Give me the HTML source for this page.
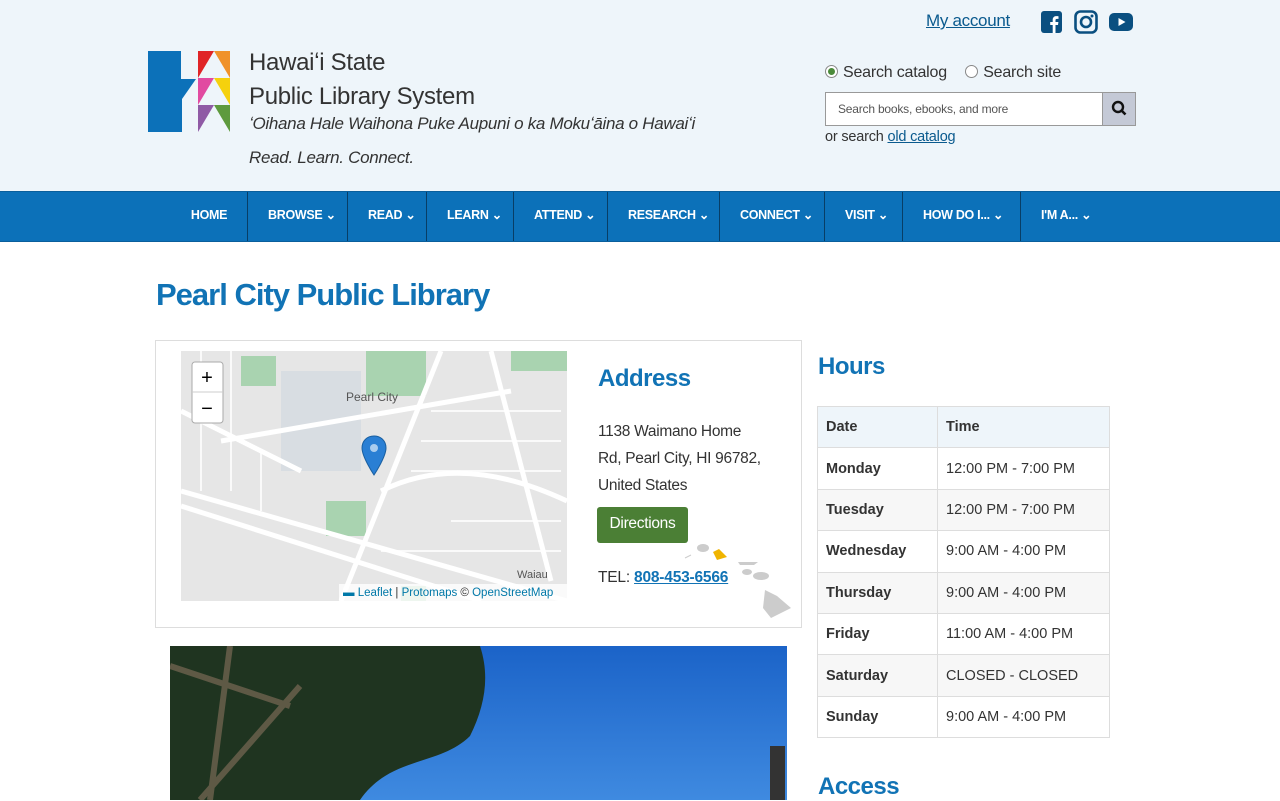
<!DOCTYPE html>
<html><head><meta charset="utf-8"><style>
*{box-sizing:border-box;margin:0;padding:0}
body{width:1280px;height:800px;overflow:hidden;background:#fff;font-family:"Liberation Sans",sans-serif;color:#333}
.hdr{position:absolute;left:0;top:0;width:1280px;height:191px;background:#eef5fa}
.nav{position:absolute;left:0;top:191px;width:1280px;height:51px;background:#0c71b9;border-top:1px solid #0a5f9c;border-bottom:1px solid #0a5f9c}
.nav span{position:absolute;top:0;height:49px;line-height:47px;color:#fff;font-weight:bold;font-size:12.5px;text-align:center;letter-spacing:-0.3px}
.sep{position:absolute;top:0;width:1px;height:49px;background:#083e66}
.abs{position:absolute}
h1{position:absolute;left:156px;top:277px;font-size:31px;color:#1173b5;font-weight:bold;letter-spacing:-1px}
table{border-collapse:collapse;font-size:14.5px}
td{border:1px solid #ddd;height:41.4px;padding:0 8px;color:#333}
</style></head><body>
<div class="hdr"></div>
<svg class="abs" style="left:148px;top:51px" width="82" height="81" viewBox="0 0 82 81">
<path d="M0 0H33V28H48L34 48V81H0Z" fill="#0c71b9"/>
<polygon points="50,0 66,0 50,27" fill="#e02427"/>
<polygon points="66,0 82,0 82,27" fill="#f0922a"/>
<polygon points="50,27 66,27 50,54" fill="#e14aa1"/>
<polygon points="66,27 82,27 82,54" fill="#f5d10d"/>
<polygon points="50,54 66,54 50,81" fill="#8f5aa5"/>
<polygon points="66,54 82,54 82,81" fill="#5e9a3e"/>
</svg>
<div class="abs" style="left:249px;top:46px;font-size:24px;line-height:34px;color:#333;letter-spacing:-0.3px">Hawaiʻi State<br>Public Library System</div>
<div class="abs" style="left:249px;top:114px;font-size:17px;font-style:italic;color:#333;letter-spacing:-0.3px">ʻOihana Hale Waihona Puke Aupuni o ka Mokuʻāina o Hawaiʻi</div>
<div class="abs" style="left:249px;top:148px;font-size:17px;font-style:italic;color:#333;letter-spacing:-0.3px">Read. Learn. Connect.</div>
<a class="abs" style="left:926px;top:11px;font-size:17px;color:#0a5a8e;text-decoration:underline;letter-spacing:-0.3px">My account</a>
<svg class="abs" style="left:1041px;top:11px" width="22" height="23"><rect width="21" height="22" rx="3" fill="#0a4f80"/><path d="M14.5 22v-8h2.5l.4-3h-2.9V9.3c0-.9.3-1.4 1.5-1.4h1.5V5.2c-.3 0-1.2-.1-2.2-.1-2.2 0-3.6 1.3-3.6 3.7V11H9.2v3h2.5v8z" fill="#fff"/></svg>
<svg class="abs" style="left:1074px;top:10px" width="25" height="25"><rect x="1.5" y="1.5" width="21" height="21" rx="5" fill="none" stroke="#0a4f80" stroke-width="2.6"/><circle cx="12" cy="12" r="5" fill="none" stroke="#0a4f80" stroke-width="2.6"/><circle cx="18" cy="6" r="1.5" fill="#0a4f80"/></svg>
<svg class="abs" style="left:1109px;top:13px" width="25" height="19"><rect width="24" height="18" rx="5" fill="#0a4f80"/><path d="M9.5 5v8l7-4z" fill="#fff"/></svg>
<div class="abs" style="left:825px;top:64px;font-size:16px;color:#333;letter-spacing:-0.2px">
<span style="display:inline-block;width:13px;height:13px;border-radius:50%;border:1px solid #888;background:#fff;position:relative;top:1px;margin-right:5px"><span style="position:absolute;left:2px;top:2px;width:7px;height:7px;border-radius:50%;background:#4a8a3a"></span></span>Search catalog
<span style="display:inline-block;width:13px;height:13px;border-radius:50%;border:1px solid #888;background:#fff;position:relative;top:1px;margin:0 5px 0 14px"></span>Search site</div>
<div class="abs" style="left:825px;top:92px;width:311px;height:34px;border:1px solid #999;background:#fff"><span style="position:absolute;left:12px;top:9px;font-size:12px;color:#555;letter-spacing:-0.2px">Search books, ebooks, and more</span>
<div style="position:absolute;right:0;top:0;width:33px;height:32px;background:#c4c9d6;border-left:1px solid #999"><svg width="33" height="32"><circle cx="15" cy="14" r="5" fill="none" stroke="#111" stroke-width="2.4"/><path d="M18.5 17.5l4 4" stroke="#111" stroke-width="2.6"/></svg></div></div>
<div class="abs" style="left:825px;top:129px;font-size:14.5px;color:#333;letter-spacing:-0.2px">or search <span style="color:#0a5a8e;text-decoration:underline">old catalog</span></div>
<div class="nav">
<span style="left:190px;width:38px">HOME</span><div class="sep" style="left:247px"></div>
<span style="left:268px">BROWSE ⌄</span><div class="sep" style="left:347px"></div>
<span style="left:368px">READ ⌄</span><div class="sep" style="left:426px"></div>
<span style="left:447px">LEARN ⌄</span><div class="sep" style="left:513px"></div>
<span style="left:534px">ATTEND ⌄</span><div class="sep" style="left:607px"></div>
<span style="left:628px">RESEARCH ⌄</span><div class="sep" style="left:719px"></div>
<span style="left:740px">CONNECT ⌄</span><div class="sep" style="left:824px"></div>
<span style="left:845px">VISIT ⌄</span><div class="sep" style="left:902px"></div>
<span style="left:923px">HOW DO I... ⌄</span><div class="sep" style="left:1020px"></div>
<span style="left:1041px">I'M A... ⌄</span>
</div>
<h1>Pearl City Public Library</h1>
<div class="abs" style="left:155px;top:340px;width:647px;height:288px;border:1px solid #ddd"></div>
<svg class="abs" style="left:181px;top:351px" width="386" height="250" viewBox="0 0 386 250">
<rect width="386" height="250" fill="#e6e6e6"/>
<rect x="185" y="0" width="60" height="45" fill="#a9d3b0"/>
<rect x="60" y="5" width="35" height="30" fill="#a9d3b0"/>
<rect x="145" y="150" width="40" height="35" fill="#a9d3b0"/>
<rect x="330" y="0" width="56" height="20" fill="#a9d3b0"/>
<rect x="220" y="235" width="25" height="15" fill="#a9d3b0"/>
<rect x="100" y="20" width="80" height="100" fill="#d8dde2"/>
<g stroke="#fff" stroke-width="5" fill="none">
<path d="M0 140L386 250"/><path d="M0 155L300 250"/><path d="M260 0L160 250"/><path d="M40 90L330 40"/><path d="M310 0L370 230"/><path d="M200 140Q280 100 386 150"/><path d="M0 60L120 120"/>
</g>
<g stroke="#fff" stroke-width="2" fill="none" opacity=".8">
<path d="M250 60h130M240 90h140M230 120h150M270 170h110M200 200h180"/><path d="M20 0v140M50 0v140M80 100v60"/>
</g>
<text x="165" y="50" font-size="12" fill="#555" font-family="Liberation Sans">Pearl City</text>
<text x="336" y="227" font-size="11" fill="#555" font-family="Liberation Sans">Waiau</text>
<path d="M193 85c-7 0-12 5-12 12 0 9 12 27 12 27s12-18 12-27c0-7-5-12-12-12z" fill="#2a7fd4" stroke="#1a5fa0"/><circle cx="193" cy="97" r="4" fill="#fff" opacity=".6"/>
<rect x="11" y="11" width="31" height="61" rx="3" fill="#fff" stroke="#aaa"/><path d="M11 41h31" stroke="#ccc"/>
<text x="26" y="33" font-size="20" text-anchor="middle" fill="#000">+</text><text x="26" y="64" font-size="20" text-anchor="middle" fill="#000">−</text>
<rect x="158" y="233" width="228" height="17" fill="#fff" opacity=".8"/>
<text x="162" y="245" font-size="11.5" fill="#333" font-family="Liberation Sans"><tspan fill="#0078a8">▬ Leaflet</tspan> | <tspan fill="#0078a8">Protomaps</tspan> © <tspan fill="#0078a8">OpenStreetMap</tspan></text>
</svg>
<div class="abs" style="left:598px;top:365px;font-size:24px;font-weight:bold;color:#1173b5;letter-spacing:-0.5px">Address</div>
<div class="abs" style="left:598px;top:418px;font-size:15.5px;line-height:27px;color:#333;letter-spacing:-0.3px">1138 Waimano Home<br>Rd, Pearl City, HI 96782,<br>United States</div>
<div class="abs" style="left:597px;top:507px;width:91px;height:36px;background:#4b7f35;border-radius:3px;color:#fff;font-size:15.5px;line-height:34px;text-align:center;letter-spacing:-0.3px">Directions</div>
<svg class="abs" style="left:683px;top:540px" width="110" height="80"><g fill="#ccc"><ellipse cx="20" cy="8" rx="6" ry="4"/><path d="M2 18l6-3" stroke="#ccc"/><path d="M55 22h20l-4 3h-14z"/><ellipse cx="64" cy="32" rx="5" ry="3"/><ellipse cx="78" cy="36" rx="8" ry="4"/><path d="M82 50l12 6 14 12-8 4-12 6-8-10z"/></g><path d="M30 12l6-3 8 8-10 3z" fill="#f0b400"/></svg>
<div class="abs" style="left:598px;top:569px;font-size:15.5px;color:#333;letter-spacing:-0.2px">TEL: <b style="color:#1173b5;text-decoration:underline">808-453-6566</b></div>
<svg class="abs" style="left:170px;top:646px" width="617" height="154">
<defs><linearGradient id="s" x1="0" y1="0" x2="0" y2="1"><stop offset="0" stop-color="#1b63c8"/><stop offset="1" stop-color="#3f8ae0"/></linearGradient></defs>
<rect width="617" height="154" fill="url(#s)"/>
<path d="M0 0h310c10 30 5 60-10 90-30 30-80 20-110 64H0z" fill="#1f3420"/>
<path d="M0 20l120 40M30 154L130 40M60 0l-20 154" stroke="#7a6a55" stroke-width="6" opacity=".7"/>
<path d="M600 100h15v54h-15z" fill="#333"/>
</svg>
<div class="abs" style="left:818px;top:353px;font-size:24px;font-weight:bold;color:#1173b5;letter-spacing:-0.5px">Hours</div>
<table class="abs" style="left:817px;top:406px;width:293px">
<tr style="background:#eef5fa"><td style="width:120px"><b>Date</b></td><td><b>Time</b></td></tr>
<tr><td><b>Monday</b></td><td>12:00 PM - 7:00 PM</td></tr>
<tr style="background:#f7f7f7"><td><b>Tuesday</b></td><td>12:00 PM - 7:00 PM</td></tr>
<tr><td><b>Wednesday</b></td><td>9:00 AM - 4:00 PM</td></tr>
<tr style="background:#f7f7f7"><td><b>Thursday</b></td><td>9:00 AM - 4:00 PM</td></tr>
<tr><td><b>Friday</b></td><td>11:00 AM - 4:00 PM</td></tr>
<tr style="background:#f7f7f7"><td><b>Saturday</b></td><td>CLOSED - CLOSED</td></tr>
<tr><td><b>Sunday</b></td><td>9:00 AM - 4:00 PM</td></tr>
</table>
<div class="abs" style="left:818px;top:773px;font-size:24px;font-weight:bold;color:#1173b5;letter-spacing:-0.5px">Access</div>
</body></html>
